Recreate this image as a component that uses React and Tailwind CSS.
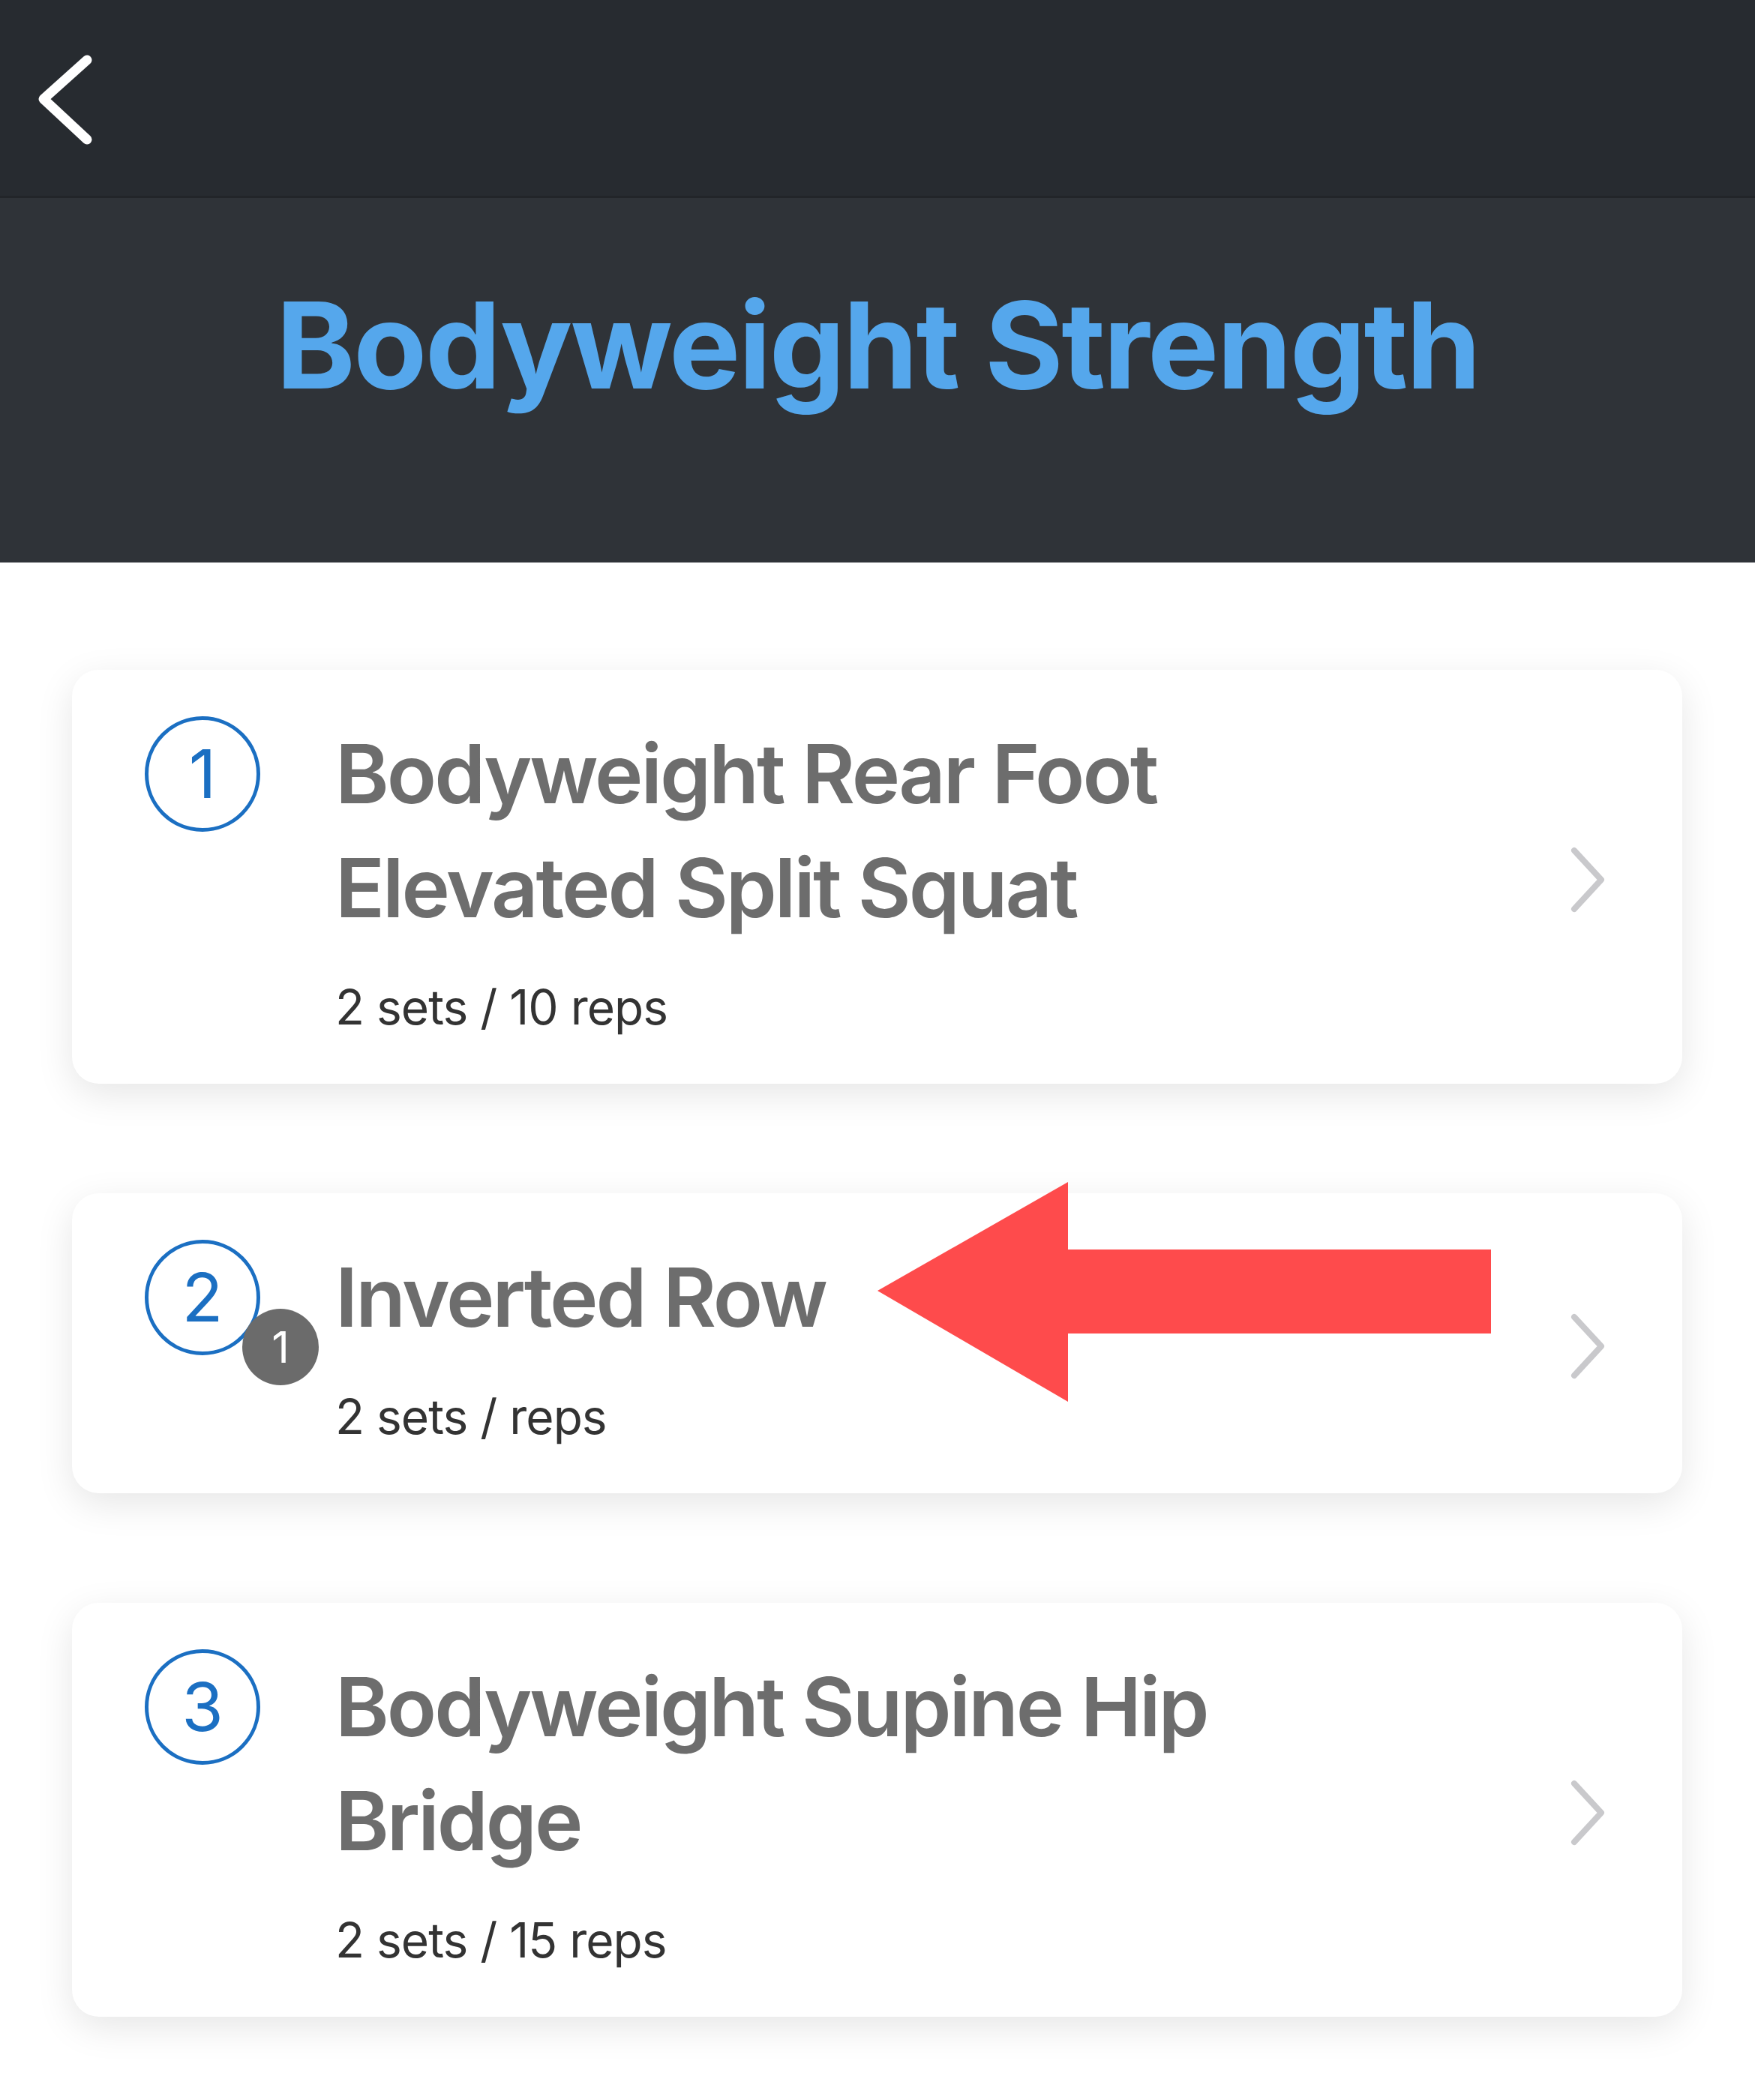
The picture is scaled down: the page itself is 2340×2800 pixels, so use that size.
const exercises = [
  { n: 1, name: 'Bodyweight Rear Foot Elevated Split Squat', detail: '2 sets / 10 reps' },
  { n: 2, name: 'Inverted Row', detail: '2 sets / reps', badge: 1, arrow: true },
  { n: 3, name: 'Bodyweight Supine Hip Bridge', detail: '2 sets / 15 reps' },
];

function RedArrow() {
  // annotation arrow drawn over the card
  return (
    <svg
      className="absolute left-[1074px] top-[-15px] pointer-events-none"
      width="820"
      height="295"
      viewBox="0 0 820 295"
    >
      <polygon points="0,145 254,0 254,90 818,90 818,202 254,202 254,293" fill="#fe4b4c" />
    </svg>
  );
}

function ExerciseCard({ item }) {
  return (
    <div className="relative flex items-start bg-white rounded-[36px] shadow-[0_14px_50px_rgba(0,0,0,0.10)] pl-[97px] pr-[100px] pt-[62px] pb-[54px]">
      {/* Step number */}
      <div className="relative shrink-0 w-[154px] h-[154px]">
        <div className="w-full h-full rounded-full border-[5px] border-[#1b6fc2] flex items-center justify-center text-[#1b6fc2] text-[90px] leading-none font-normal">
          {item.n}
        </div>
        {item.badge && (
          <div className="absolute left-[130px] top-[92px] w-[102px] h-[102px] rounded-full bg-[#6b6b6b] flex items-center justify-center text-white text-[58px] leading-none">
            {item.badge}
          </div>
        )}
      </div>

      <div className="flex-1 pl-[100px]">
        <div className="text-[109px] leading-[152px] font-semibold text-[#6d6d6d] max-w-[1250px] tracking-[-3px]">
          {item.name}
        </div>
        <div className="mt-[36px] text-[64px] leading-[96px] text-[#333333] tracking-[-1px]">
          {item.detail}
        </div>
      </div>

      <svg className="self-center shrink-0 ml-[4px]" width="52" height="90" viewBox="0 0 52 90">
        <polyline
          points="8,6 44,45 8,84"
          fill="none"
          stroke="#c9c9cc"
          strokeWidth="8"
          strokeLinecap="round"
          strokeLinejoin="round"
        />
      </svg>

      {item.arrow && <RedArrow />}
    </div>
  );
}

export default function App() {
  return (
    <div className="min-h-[2800px] bg-white" style={{ fontFamily: 'Inter, "Liberation Sans", sans-serif' }}>
      {/* Top nav */}
      <div className="h-[264px] bg-[#272b30] border-b-[3px] border-[#222529] flex items-start pt-[72px] pl-[48px]">
        <svg width="80" height="124" viewBox="0 0 80 124">
          <polyline
            points="68,8 10,60 68,114"
            fill="none"
            stroke="#ffffff"
            strokeWidth="13"
            strokeLinecap="round"
            strokeLinejoin="round"
          />
        </svg>
      </div>

      {/* Page header */}
      <div className="h-[486px] bg-[#2f3338] pt-[116px]">
        <h1 className="text-center text-[160px] leading-none font-bold text-[#55a7ec] tracking-[-2.5px]">
          Bodyweight Strength
        </h1>
      </div>

      {/* Exercise list */}
      <div className="flex flex-col gap-[146px] pt-[143px] pl-[96px] pr-[97px] pb-[110px]">
        {exercises.map((item) => (
          <ExerciseCard key={item.n} item={item} />
        ))}
      </div>
    </div>
  );
}
